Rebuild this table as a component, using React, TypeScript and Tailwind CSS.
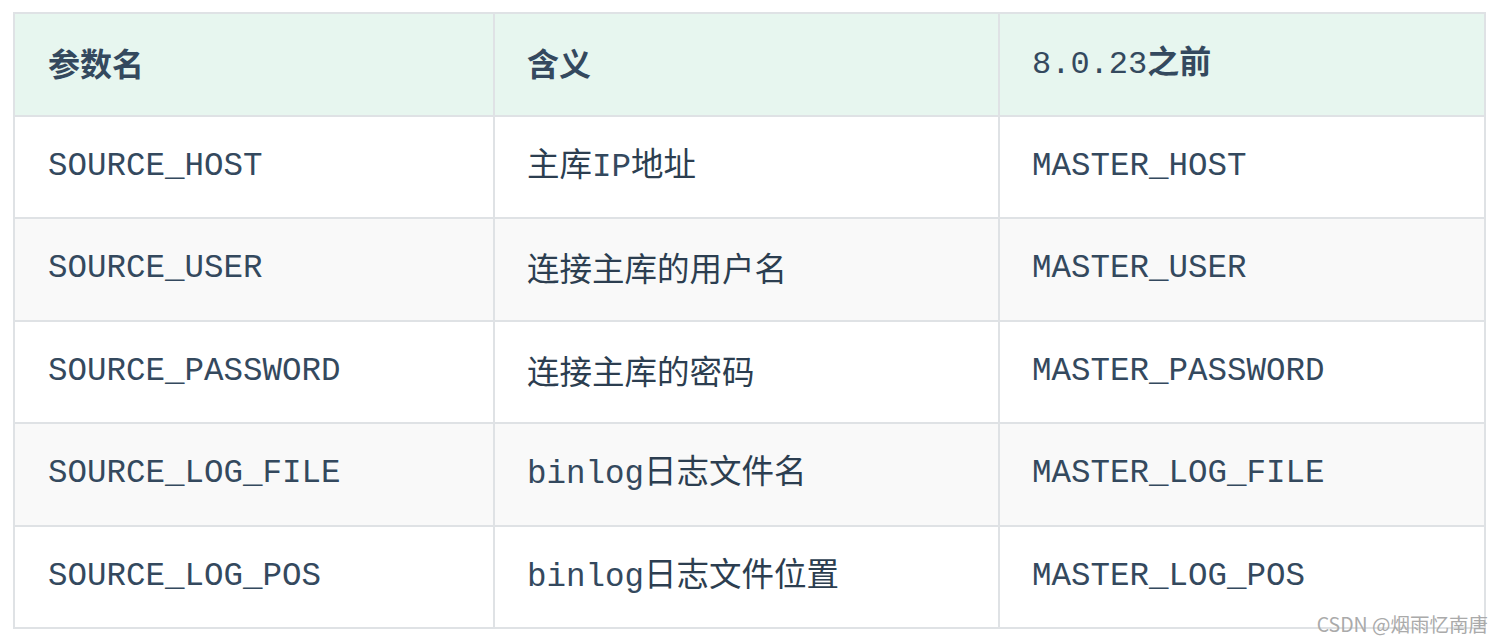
const rows = [
  { name: "SOURCE_HOST", mono: "", meaning: "主库", tail: "IP", after: "地址", old: "MASTER_HOST", h: "h-[102px]" },
  { name: "SOURCE_USER", mono: "", meaning: "连接主库的用户名", tail: "", after: "", old: "MASTER_USER", h: "h-[103px]" },
  { name: "SOURCE_PASSWORD", mono: "", meaning: "连接主库的密码", tail: "", after: "", old: "MASTER_PASSWORD", h: "h-[102px]" },
  { name: "SOURCE_LOG_FILE", mono: "binlog", meaning: "日志文件名", tail: "", after: "", old: "MASTER_LOG_FILE", h: "h-[103px]" },
  { name: "SOURCE_LOG_POS", mono: "binlog", meaning: "日志文件位置", tail: "", after: "", old: "MASTER_LOG_POS", h: "h-[102px]" },
];

const mono = "font-['Liberation_Mono','Noto_Sans_CJK_SC',monospace]";
const cjk = "font-['Noto_Sans_CJK_SC','Noto_Sans',sans-serif]";

export default function App() {
  return (
    <div className="relative w-[1504px] h-[641px] bg-white overflow-hidden">
      <div className="pt-[12px] pl-[13px]">
        <table className="border-collapse table-fixed w-[1471px] text-[#34495e]">
          <colgroup>
            <col className="w-[480px]" />
            <col className="w-[505px]" />
            <col className="w-[486px]" />
          </colgroup>
          <thead>
            <tr className="bg-[#e7f6ef]">
              <th className={`border-2 border-[#dfe2e5] h-[103px] px-[33px] pb-[6px] text-left text-[32px] font-bold ${cjk}`}>
                参数名
              </th>
              <th className={`border-2 border-[#dfe2e5] h-[103px] pl-[32px] pr-[33px] pb-[6px] text-left text-[32px] font-bold ${cjk}`}>
                含义
              </th>
              <th className="border-2 border-[#dfe2e5] h-[103px] pl-[32px] pr-[33px] pb-[6px] text-left text-[32px]">
                <span className={`${mono} font-normal text-[32px]`}>8.0.23</span>
                <span className={`${cjk} font-bold`}>之前</span>
              </th>
            </tr>
          </thead>
          <tbody>
            {rows.map((row, i) => (
              <tr key={row.name} className={i % 2 === 1 ? "bg-[#f9f9f9]" : "bg-white"}>
                <td className={`border-2 border-[#dfe2e5] ${row.h} px-[33px] text-[32.5px] ${mono}`}>
                  {row.name}
                </td>
                <td className={`border-2 border-[#dfe2e5] ${row.h} pl-[32px] pr-[33px] pb-[4px] text-[32.5px] ${cjk} text-[#2c3e50]`}>
                  {row.mono && <span className={`${mono} text-[32.5px] text-[#34495e]`}>{row.mono}</span>}
                  {row.meaning}
                  {row.tail && <span className={`${mono} text-[32.5px] text-[#34495e]`}>{row.tail}</span>}
                  {row.after}
                </td>
                <td className={`border-2 border-[#dfe2e5] ${row.h} pl-[32px] pr-[33px] text-[32.5px] ${mono}`}>
                  {row.old}
                </td>
              </tr>
            ))}
          </tbody>
        </table>
      </div>
      <div
        className={`absolute right-[16px] bottom-[8px] text-[19.5px] leading-none text-[#aaaaaa] ${cjk}`}
      >
        CSDN @烟雨忆南唐
      </div>
    </div>
  );
}
